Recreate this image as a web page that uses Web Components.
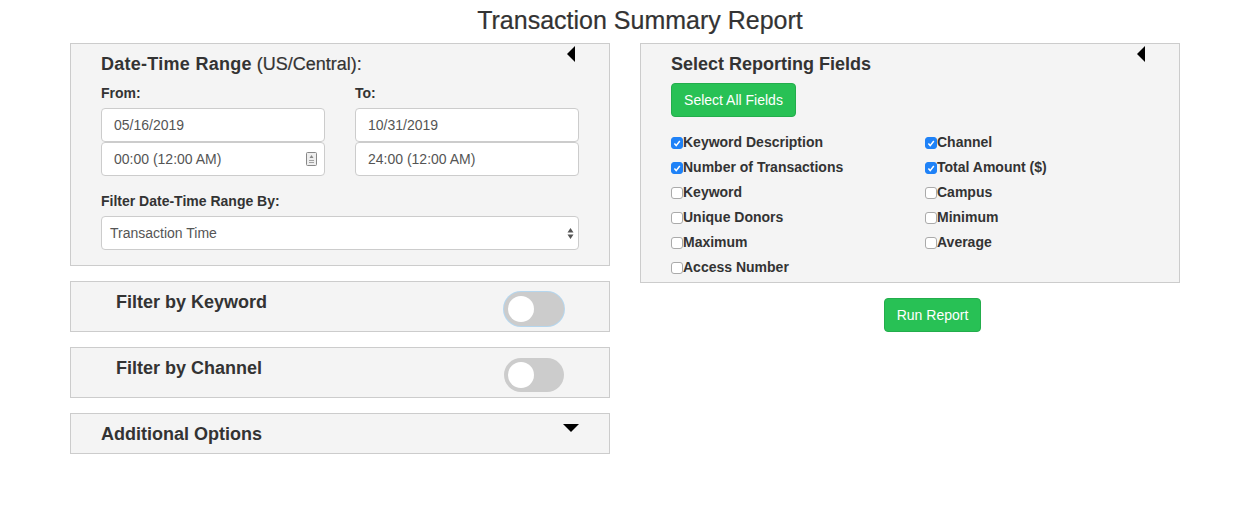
<!DOCTYPE html>
<html><head><meta charset="utf-8"><style>
html,body{margin:0;padding:0;background:#fff;font-family:"Liberation Sans",Arial,sans-serif;color:#333}
</style></head><body>
<report-page></report-page>
<script>
function def(name, css, html, init){
  customElements.define(name, class extends HTMLElement{
    constructor(){super();const r=this.attachShadow({mode:'open'});r.innerHTML='<style>'+css+'</style>'+(typeof html==='function'?html(this):html);}
    connectedCallback(){ if(init) init(this); }
  });
}
def('ui-panel',`:host{display:block;position:relative;box-sizing:border-box;background:#f4f4f4;border:1px solid #ccc}
.tri{position:absolute;width:0;height:0}
:host([arrow=left]) .tri{top:2px;right:34px;border-top:8px solid transparent;border-bottom:8px solid transparent;border-right:8px solid #000}
:host([arrow=down]) .tri{top:10px;right:30px;border-left:8px solid transparent;border-right:8px solid transparent;border-top:8px solid #000}`,
`<slot></slot><div class="tri"></div>`);
def('ui-heading',`:host{display:block;font-size:18px;line-height:20px;font-weight:700;color:#333}`,`<slot></slot>`);
def('ui-label',`:host{display:block;font-size:14px;line-height:20px;font-weight:700;color:#333}`,`<slot></slot>`);
def('ui-field',`:host{display:flex;align-items:center;justify-content:space-between;box-sizing:border-box;height:34px;background:#fff;border:1px solid #ccc;border-radius:4px;padding:0 7px 0 12px;font-size:14px;color:#555}
:host([compact]){padding-left:8px;padding-right:4px}`,`<slot></slot><slot name="end"></slot>`);
def('ui-button',`:host{display:inline-block;box-sizing:border-box;height:34px;line-height:32px;padding:0 12px;background:#28c155;border:1px solid #23ad4c;border-radius:4px;color:#fff;font-size:14px;text-align:center}`,`<slot></slot>`);
def('ui-toggle',`:host{display:block;box-sizing:border-box;position:relative;width:60px;height:34px;border-radius:17px;background:#ccc}
:host([focus]){box-shadow:0 0 0 1px #b5d6ee}
i{position:absolute;left:4px;top:4px;width:26px;height:26px;border-radius:50%;background:#fff}`,`<i></i>`);
def('ui-check',`:host{display:flex;align-items:center;font-size:14px;line-height:20px;height:20px;font-weight:700;color:#333}
b{display:flex;align-items:center;justify-content:center;box-sizing:border-box;width:12px;height:12px;border:1px solid #aaa;border-radius:3px;background:#fff;margin-top:1px;flex:none}
svg{display:none;width:10px;height:10px;flex:none}
:host([checked]) b{background:#1f82f7;border-color:#1f82f7}
:host([checked]) svg{display:block}`,
`<b><svg viewBox="0 0 10 10"><path d="M2.4 5.6 L4.2 7.6 L7.8 3" fill="none" stroke="#fff" stroke-width="1.5"/></svg></b><slot></slot>`);
def('date-panel',`:host{display:block}
ui-panel{height:223px;padding:10px 30px 0 30px}
.n{font-weight:400;-webkit-text-stroke:.2px #333}
.h{letter-spacing:.27px}
.cols{display:grid;grid-template-columns:224px 224px;column-gap:30px;margin-top:9px}
ui-label{margin-bottom:5px}
.f{margin-top:15px;margin-bottom:0}
.sel{margin-top:5px}
svg{display:block}
`,`<ui-panel arrow="left"><ui-heading><span class="h">Date-Time Range</span> <span class="n">(US/Central):</span></ui-heading>
<div class="cols"><div><ui-label>From:</ui-label><ui-field>05/16/2019</ui-field><ui-field>00:00 (12:00 AM)<svg slot="end" width="11" height="14" viewBox="0 0 11 14"><rect x=".5" y=".5" width="10" height="13" rx="1" fill="#eee" stroke="#888"/><path d="M5.5 3 L7.5 6 H3.5Z M3 8 H8 V8.8 H3Z M3 10 H8 V10.8 H3Z" fill="#888"/></svg></ui-field></div>
<div><ui-label>To:</ui-label><ui-field>10/31/2019</ui-field><ui-field>24:00 (12:00 AM)</ui-field></div></div>
<ui-label class="f">Filter Date-Time Range By:</ui-label>
<ui-field class="sel" compact>Transaction Time<svg slot="end" width="7" height="13" viewBox="0 0 7 13"><path d="M3.5 1 L6.5 5.4 H.5Z M3.5 12 L.5 7.6 H6.5Z" fill="#555"/></svg></ui-field>
</ui-panel>`);
def('toggle-panel',`:host{display:block}
ui-panel{height:51px}
.r{display:flex;justify-content:space-between;padding:10px 45px 0 45px}`,
h=>`<ui-panel><div class="r"><ui-heading>${h.getAttribute('label')}</ui-heading><ui-toggle ${h.hasAttribute('focus')?'focus':''}></ui-toggle></div></ui-panel>`);
def('fields-panel',`:host{display:block}
ui-panel{height:240px;padding:10px 30px 0 30px}
ui-button{display:block;width:125px;margin-top:9px;padding:0}
.g{display:grid;grid-template-columns:254px 254px;grid-auto-rows:25px;margin-top:15px}`,
`<ui-panel arrow="left"><ui-heading>Select Reporting Fields</ui-heading><ui-button>Select All Fields</ui-button>
<div class="g">
<ui-check checked>Keyword Description</ui-check><ui-check checked>Channel</ui-check>
<ui-check checked>Number of Transactions</ui-check><ui-check checked>Total Amount ($)</ui-check>
<ui-check>Keyword</ui-check><ui-check>Campus</ui-check>
<ui-check>Unique Donors</ui-check><ui-check>Minimum</ui-check>
<ui-check>Maximum</ui-check><ui-check>Average</ui-check>
<ui-check>Access Number</ui-check></div></ui-panel>`);
def('options-panel',`:host{display:block}
ui-panel{height:41px;padding:10px 30px}`,`<ui-panel arrow="down"><ui-heading>Additional Options</ui-heading></ui-panel>`);
def('report-page',`:host{display:block;width:1250px;height:524px;padding-top:5px;box-sizing:border-box}
h1{margin:0;font-size:25px;line-height:30px;font-weight:400;color:#333;text-align:center;width:1280px;-webkit-text-stroke:.2px #333}
.cols{display:grid;grid-template-columns:540px 540px;column-gap:30px;margin:8px 0 0 70px}
.l{display:flex;flex-direction:column;gap:15px}
.rb{display:flex;justify-content:center;margin-top:15px;padding-left:45px}`,
`<h1>Transaction Summary Report</h1><div class="cols"><div class="l"><date-panel></date-panel><toggle-panel label="Filter by Keyword" focus></toggle-panel><toggle-panel label="Filter by Channel"></toggle-panel><options-panel></options-panel></div>
<div><fields-panel></fields-panel><div class="rb"><ui-button>Run Report</ui-button></div></div></div>`);
</script></body></html>
